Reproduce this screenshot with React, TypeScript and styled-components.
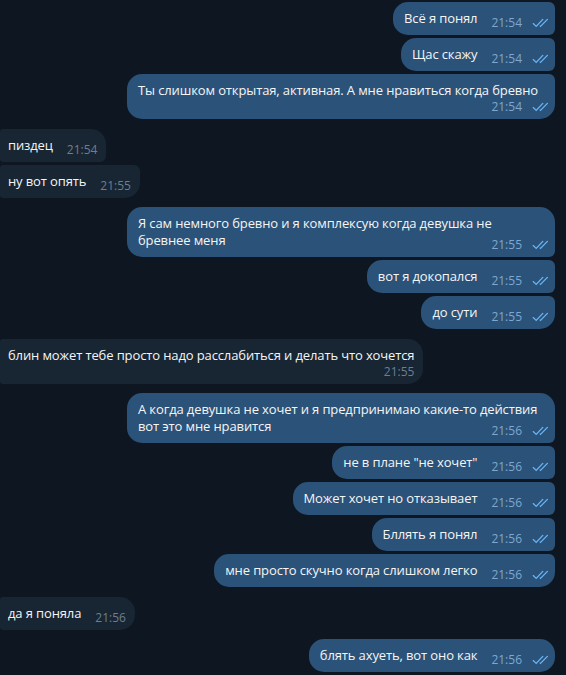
import React from 'react';
import styled, { createGlobalStyle } from 'styled-components';

const GlobalStyle = createGlobalStyle`
    html, body {
        margin: 0;
        padding: 0;
        background: #0e1621;
    }
    body {
        font-family: "Open Sans", "Noto Sans", sans-serif;
        -webkit-font-smoothing: antialiased;
    }
`;

type Message = {
    out: boolean;
    text: string;
    time: string;
    below?: boolean;
    full?: boolean;
};

const messages: Message[] = [
    { out: true, text: 'Всё я понял', time: '21:54' },
    { out: true, text: 'Щас скажу', time: '21:54' },
    { out: true, text: 'Ты слишком открытая, активная. А мне нравиться когда бревно', time: '21:54', below: true, full: true },
    { out: false, text: 'пиздец', time: '21:54' },
    { out: false, text: 'ну вот опять', time: '21:55' },
    { out: true, text: 'Я сам немного бревно и я комплексую когда девушка не\nбревнее меня', time: '21:55', full: true },
    { out: true, text: 'вот я докопался', time: '21:55' },
    { out: true, text: 'до сути', time: '21:55' },
    { out: false, text: 'блин может тебе просто надо расслабиться и делать что хочется', time: '21:55', below: true },
    { out: true, text: 'А когда девушка не хочет и я предпринимаю какие-то действия\nвот это мне нравится', time: '21:56', full: true },
    { out: true, text: 'не в плане "не хочет"', time: '21:56' },
    { out: true, text: 'Может хочет но отказывает', time: '21:56' },
    { out: true, text: 'Бллять я понял', time: '21:56' },
    { out: true, text: 'мне просто скучно когда слишком легко', time: '21:56' },
    { out: false, text: 'да я поняла', time: '21:56' },
    { out: true, text: 'блять ахуеть, вот оно как', time: '21:56' },
];

const Chat = styled.div`
    display: flex;
    flex-direction: column;
    padding: 2px 11px 0 0;
`;

const Row = styled.div<{ $out: boolean; $newGroup: boolean }>`
    display: flex;
    justify-content: ${({ $out }) => ($out ? 'flex-end' : 'flex-start')};
    margin-top: ${({ $newGroup }) => ($newGroup ? '9.5px' : '3px')};
    &:first-child {
        margin-top: 0;
    }
`;

const Bubble = styled.div<{ $out: boolean; $first: boolean; $last: boolean; $full?: boolean }>`
    max-width: 428px;
    width: ${({ $full }) => ($full ? '428px' : 'auto')};
    box-sizing: border-box;
    padding: ${({ $out }) => ($out ? '8px 6px 5px 11px' : '8px 9px 5px 8px')};
    background: ${({ $out }) => ($out ? '#2b5278' : '#182533')};
    color: #f5f5f5;
    font-size: 13px;
    line-height: 17px;
    letter-spacing: -0.12px;
    border-radius: ${({ $out, $first, $last }) => {
        const top = $first ? '15px' : '6px';
        const bottom = $last ? '15px' : '6px';
        return $out ? `15px ${top} ${bottom} 15px` : `3px ${top} ${bottom} 3px`;
    }};
`;

const Text = styled.span<{ $single?: boolean }>`
    white-space: ${({ $single }) => ($single ? 'nowrap' : 'pre-wrap')};
`;

const Meta = styled.span<{ $out: boolean; $below?: boolean }>`
    display: flex;
    float: ${({ $below }) => ($below ? 'none' : 'right')};
    justify-content: flex-end;
    align-items: center;
    gap: 10px;
    margin: ${({ $below }) => ($below ? '1px 0 0 0' : '6px 0 0 14px')};
    font-size: 12px;
    line-height: 14px;
    letter-spacing: 0;
    white-space: nowrap;
    color: ${({ $out }) => ($out ? '#7da8d3' : '#6d7f8f')};
`;

const Checks = styled.svg`
    width: 17px;
    height: 10px;
    flex: none;
    color: #6ab3f2;
`;

const DoubleCheck = () => (
    <Checks viewBox="0 0 17 10" fill="none" stroke="currentColor" strokeWidth="1.35" strokeLinecap="round">
        <path d="M1.2 5.6 L4.2 8.4 L10.8 1.4" />
        <path d="M8.2 8.1 L8.5 8.4 L15.4 1.4" />
    </Checks>
);

const App: React.FC = () => {
    return (
        <>
            <GlobalStyle />
            <Chat>
                {messages.map((m, i) => {
                    const prev = messages[i - 1];
                    const next = messages[i + 1];
                    const newGroup = !!prev && prev.out !== m.out;
                    const last = !next || next.out !== m.out;
                    return (
                        <Row key={i} $out={m.out} $newGroup={newGroup}>
                            <Bubble $out={m.out} $first={newGroup} $last={last} $full={m.full}>
                                <Text $single={m.below}>{m.text}</Text>
                                <Meta $out={m.out} $below={m.below}>
                                    {m.time}
                                    {m.out && <DoubleCheck />}
                                </Meta>
                            </Bubble>
                        </Row>
                    );
                })}
            </Chat>
        </>
    );
};

export default App;
